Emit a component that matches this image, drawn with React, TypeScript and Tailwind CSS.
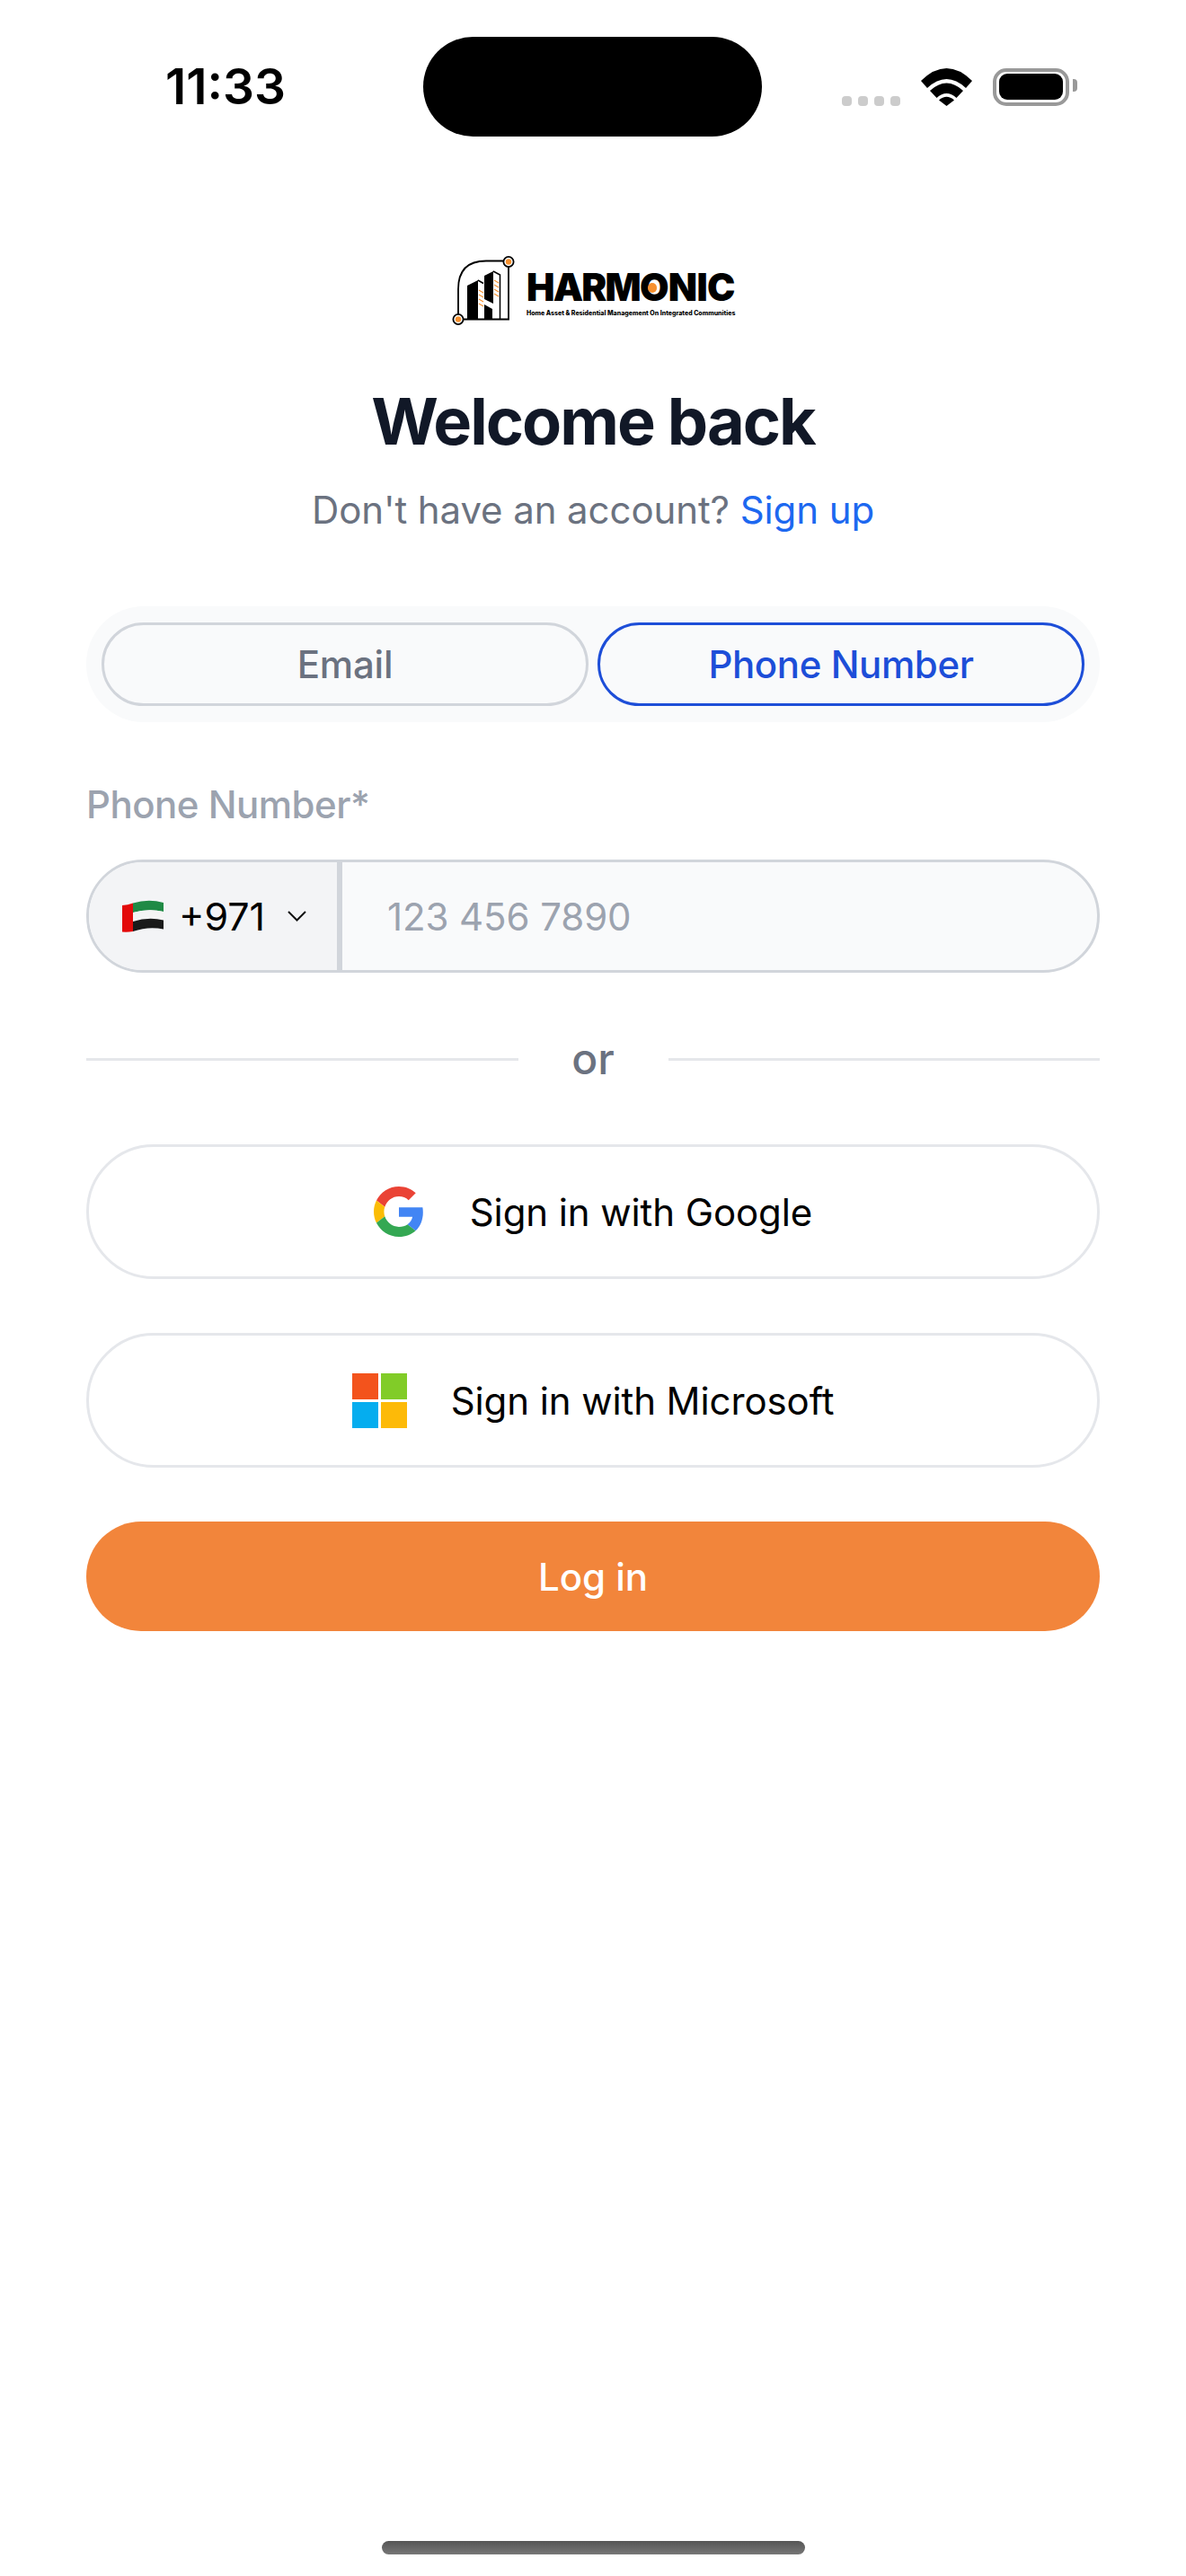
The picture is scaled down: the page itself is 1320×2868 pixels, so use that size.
import React from 'react';

const StatusBar = () => (
    <div className="grid grid-cols-[471px_377px_1fr] items-center pt-[41px]">
        <div className="pl-[184px] text-[55px] leading-none font-semibold text-black">11:33</div>
        <div className="h-[111px] rounded-[56px] bg-black" />
        <div className="flex items-end pl-[89px]">
            <div className="flex gap-[7px] pb-0">
                {[0, 1, 2, 3].map((i) => (
                    <span key={i} className="h-[11px] w-[11px] rounded-[4px] bg-[#cccccc]" />
                ))}
            </div>
            <svg className="ml-[23px]" width="57" height="42" viewBox="0 0 57 42">
                <path d="M0 14 Q28.5 -14 57 14 L50 22 Q28.5 2 7 22 Z" fill="#000" />
                <path d="M10 25 Q28.5 8 47 25 L39.5 33 Q28.5 23 17.5 33 Z" fill="#000" />
                <path d="M20 35.5 Q28.5 28 37 35.5 L28.5 42 Z" fill="#000" />
            </svg>
            <div className="relative ml-[23px] flex h-[42px] w-[85px] items-center justify-center rounded-[15px] border-[4px] border-[#999999]">
                <div className="h-[29px] w-[71px] rounded-[9px] bg-black" />
                <div className="absolute top-[8px] right-[-13px] h-[14px] w-[5px] rounded-r-[4px] bg-[#999999]" />
            </div>
        </div>
    </div>
);

const Logo = () => (
    <div className="flex items-start justify-center">
        <svg width="84" height="85" viewBox="500 280 84 85">
            <path d="M510 355.5 V322 Q510 290.5 541 290.5 H566 V355.5 H510" fill="none" stroke="#000" strokeWidth="1.8" />
            <path d="M520 318 L532 312 V356 H520 Z" fill="#000" />
            <path d="M532 312 L538 315.5" stroke="#000" strokeWidth="1.5" />
            <path d="M539 307 L549 302 V338 L539 333 Z" fill="#000" />
            <path d="M539 339 L548 344 V356 H539 Z" fill="#000" />
            <path d="M549 302 L556.5 306 V356" fill="none" stroke="#000" strokeWidth="1.5" />
            <path d="M533 323 L538 326 M533 328 L538 331 M533 333 L538 336 M533 338 L538 341 M550 312 L555 315 M550 317 L555 320 M550 322 L555 325 M550 327 L555 330" stroke="#f7912f" strokeWidth="1.1" />
            <circle cx="566" cy="291.5" r="5.6" fill="#fff" stroke="#000" strokeWidth="1.8" />
            <circle cx="566" cy="291.5" r="3.2" fill="#f7912f" />
            <circle cx="510" cy="355.5" r="5.6" fill="#fff" stroke="#000" strokeWidth="1.8" />
            <circle cx="510" cy="355.5" r="3.2" fill="#f7912f" />
        </svg>
        <div className="ml-[2px] flex w-[234px] flex-col pt-[18px]">
            <div className="relative text-[42px] leading-[44px] font-black text-black">
                <span className="tracking-[-1.8px]">HARM</span>
                <span className="tracking-[-0.7px]">ONIC</span>
                <span className="absolute top-[17px] left-[135px] h-[11px] w-[10px] rounded-full bg-[#f7912f]" />
            </div>
            <div className="mt-[2px] text-[7px] leading-[10px] font-extrabold whitespace-nowrap text-black">
                Home Asset &amp; Residential Management On Integrated Communities
            </div>
        </div>
    </div>
);

const GoogleIcon = () => (
    <svg width="56" height="56" viewBox="0 0 48 48">
        <path fill="#EA4335" d="M24 9.5c3.54 0 6.71 1.22 9.21 3.6l6.85-6.85C35.9 2.38 30.47 0 24 0 14.62 0 6.51 5.38 2.56 13.22l7.98 6.19C12.43 13.72 17.74 9.5 24 9.5z" />
        <path fill="#4285F4" d="M46.98 24.55c0-1.57-.15-3.09-.38-4.55H24v9.02h12.94c-.58 2.96-2.26 5.48-4.78 7.18l7.73 6c4.51-4.18 7.09-10.36 7.09-17.65z" />
        <path fill="#FBBC05" d="M10.53 28.59c-.48-1.45-.76-2.99-.76-4.59s.27-3.14.76-4.59l-7.98-6.19C.92 16.46 0 20.12 0 24c0 3.88.92 7.54 2.56 10.78l7.97-6.19z" />
        <path fill="#34A853" d="M24 48c6.48 0 11.93-2.13 15.89-5.81l-7.73-6c-2.15 1.45-4.92 2.3-8.16 2.3-6.26 0-11.57-4.22-13.47-9.91l-7.98 6.19C6.51 42.62 14.62 48 24 48z" />
    </svg>
);

const MicrosoftIcon = () => (
    <div className="grid h-[61px] w-[61px] grid-cols-2 gap-[3px]">
        <div className="bg-[#f3531c]" />
        <div className="bg-[#81cc28]" />
        <div className="bg-[#05adef]" />
        <div className="bg-[#fdba08]" />
    </div>
);

const UaeFlag = () => (
    <svg width="48" height="36" viewBox="0 0 48 36">
        <path d="M13 3.5 Q30 -1.5 47 3 V13 Q30 9 13 14 Z" fill="#1f8a45" />
        <path d="M13 14 Q30 9 47 13 V22.5 Q30 18.5 13 24 Z" fill="#f4f4f4" />
        <path d="M13 24 Q30 18.5 47 22.5 V32.5 Q30 29 13 35 Z" fill="#1a1a1a" />
        <path d="M1 6 Q7 5.5 13 3.5 V35 Q7 36 1 35.5 Z" fill="#e30a0a" />
    </svg>
);

const SocialButton = ({ icon, label, gap }: { icon: React.ReactNode; label: string; gap: string }) => (
    <button className={`flex h-[150px] w-full items-center justify-center rounded-full border-[3px] border-[#e5e7eb] bg-white ${gap}`}>
        {icon}
        <span className="text-[42px] tracking-[-0.1px] text-black">{label}</span>
    </button>
);

export default function App() {
    return (
        <div className="flex h-[2868px] w-[1320px] flex-col bg-white font-['Inter',sans-serif]">
            <StatusBar />
            <div className="flex flex-1 flex-col px-[96px]">
                <div className="mt-[128px]">
                    <Logo />
                </div>
                <h1 className="mt-[64px] text-center text-[72px] leading-[80px] font-bold tracking-[-2px] text-[#111827]">Welcome back</h1>
                <p className="mt-[29px] text-center text-[42px] leading-[60px] tracking-[-0.1px] text-[#6b7280]">
                    Don't have an account? <span className="text-[#1d68f0]">Sign up</span>
                </p>

                <div className="mt-[77px] flex h-[129px] items-center gap-[10px] rounded-[64px] bg-[#f9fafb] px-[17px]">
                    <button className="h-[93px] flex-1 rounded-full border-[3px] border-[#d1d5db] text-[42px] font-medium tracking-[-0.2px] text-[#6b7280]">Email</button>
                    <button className="h-[93px] flex-1 rounded-full border-[3px] border-[#1d4ed8] text-[42px] font-medium tracking-[-0.4px] text-[#1d4ed8]">Phone Number</button>
                </div>

                <label className="mt-[68px] text-[42px] leading-[48px] font-medium tracking-[-0.5px] text-[#9ca3af]">Phone Number*</label>
                <div className="mt-[37px] flex h-[126px] overflow-hidden rounded-full border-[3px] border-[#d1d5db] bg-[#f9fafb]">
                    <div className="flex w-[282px] items-center border-r-[6px] border-[#d1d5db] bg-[#f3f4f6] pl-[36px]">
                        <UaeFlag />
                        <span className="ml-[16px] text-[43px] text-black">+971</span>
                        <svg className="ml-[25px]" width="21" height="12" viewBox="0 0 21 12">
                            <path d="M1 1 L10.5 10.5 L20 1" fill="none" stroke="#111" strokeWidth="2" />
                        </svg>
                    </div>
                    <div className="flex flex-1 items-center pl-[50px] text-[42px] tracking-[-0.1px] text-[#9ca3af]">123 456 7890</div>
                </div>

                <div className="mt-[67px] flex items-center">
                    <div className="h-[3px] flex-1 bg-[#e5e7eb]" />
                    <span className="w-[167px] text-center text-[48px] leading-[58px] font-medium text-[#6b7280]">or</span>
                    <div className="h-[3px] flex-1 bg-[#e5e7eb]" />
                </div>

                <div className="mt-[66px] flex flex-col gap-[60px]">
                    <SocialButton icon={<GoogleIcon />} label="Sign in with Google" gap="gap-[51px]" />
                    <SocialButton icon={<MicrosoftIcon />} label="Sign in with Microsoft" gap="gap-[49px]" />
                </div>

                <button className="mt-[60px] h-[122px] w-full rounded-full bg-[#f2853b] text-[42px] font-medium text-white">Log in</button>
            </div>
            <div className="flex justify-center pb-[24px]">
                <div className="h-[15px] w-[471px] rounded-full bg-gradient-to-b from-[#555555] to-[#777777]" />
            </div>
        </div>
    );
}
